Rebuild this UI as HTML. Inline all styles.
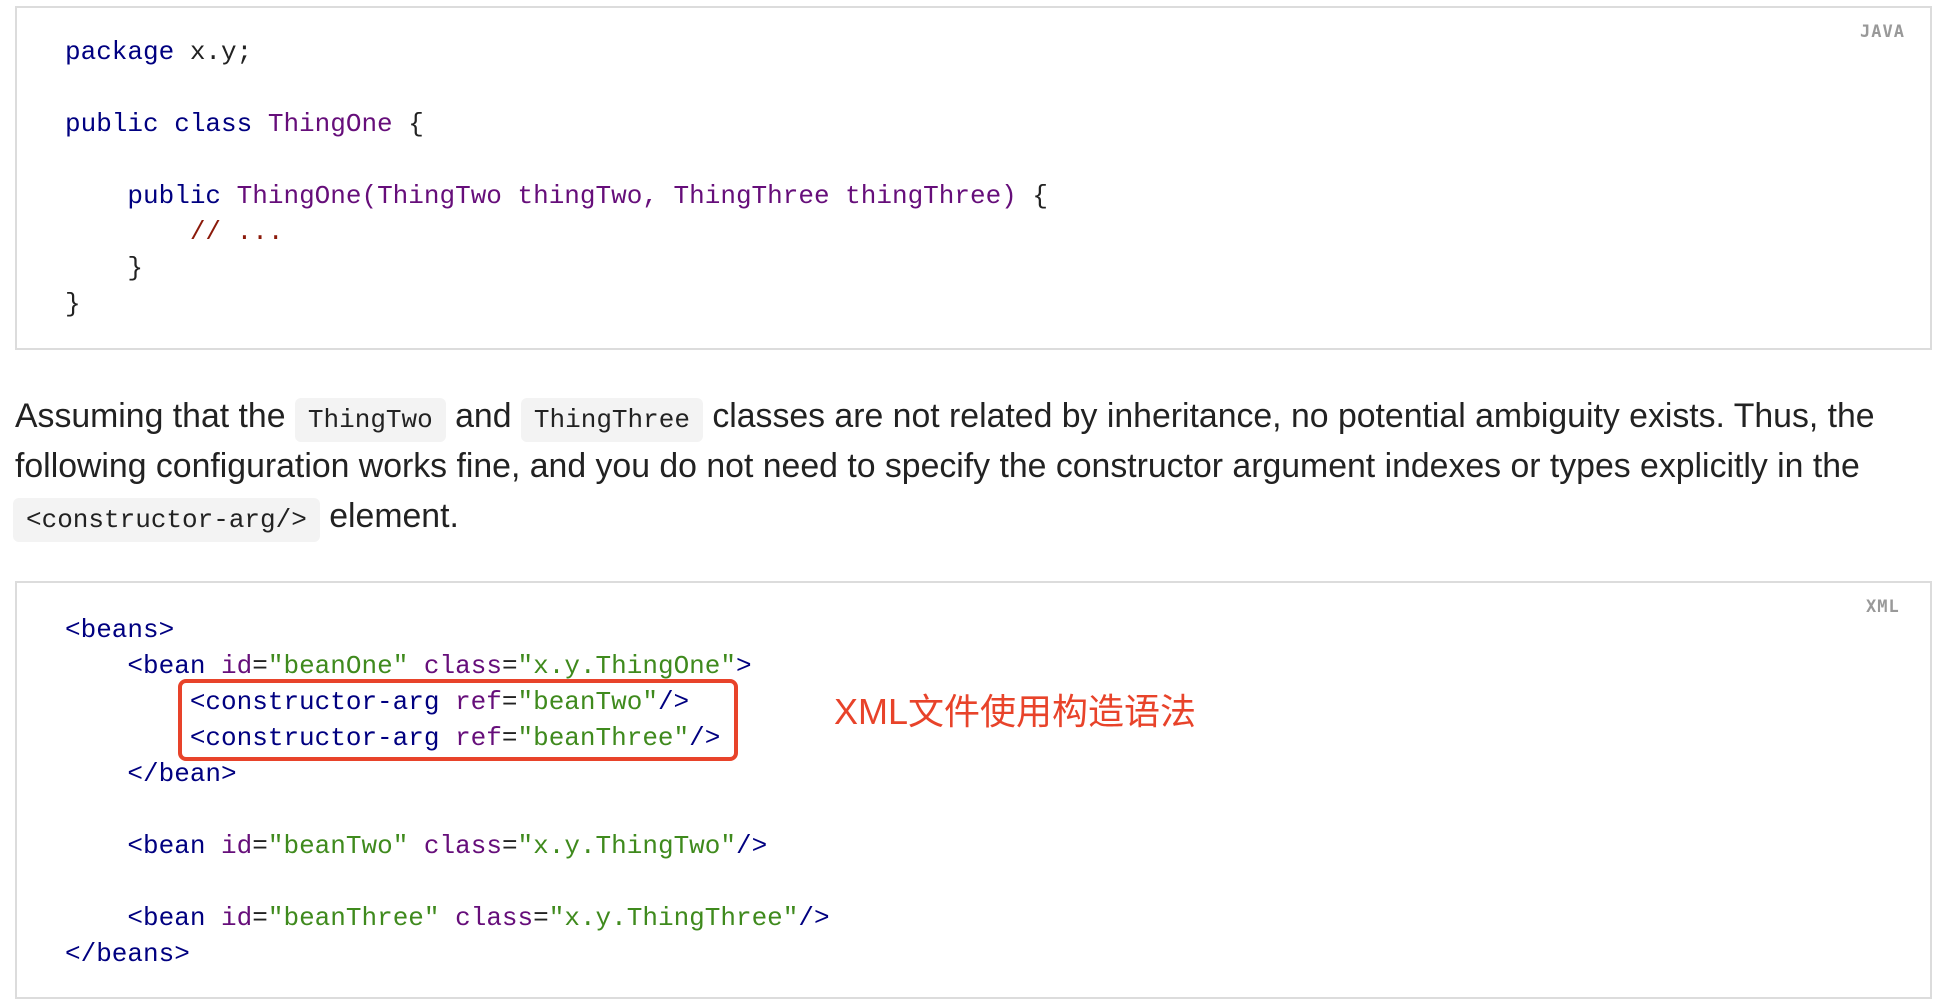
<!DOCTYPE html>
<html><head><meta charset="utf-8"><style>
html,body{margin:0;padding:0;background:#fff;width:1942px;height:1006px;overflow:hidden;position:relative}
.box{position:absolute;left:15px;width:1913px;border:2px solid #dcdcdc;background:#fff}
pre{position:absolute;margin:0;font-family:"Liberation Mono",monospace;font-size:26px;line-height:36px;color:#222}
.k{color:#000080}.t{color:#660e7a}.c{color:#8b1a0a}.s{color:#3f8a1d}.a{color:#660e7a}
.lab{position:absolute;font-family:"DejaVu Sans Mono",monospace;font-weight:bold;font-size:17px;color:#999;letter-spacing:1px}
.p{position:absolute;left:15px;font-family:"Liberation Sans",sans-serif;font-size:33.8px;color:#222;white-space:nowrap;line-height:50px}
code{font-family:"Liberation Mono",monospace;font-size:26px;background:#f3f3f3;border-radius:6px;padding:7px 13px}
</style></head><body>
<div class="box" style="top:6px;height:340px">
<div class="lab" style="left:1843px;top:14px">JAVA</div>
<pre style="left:48px;top:26px"><span class="k">package</span> x.y;

<span class="k">public class</span> <span class="t">ThingOne</span> {

    <span class="k">public</span> <span class="t">ThingOne(ThingTwo thingTwo, ThingThree thingThree)</span> {
        <span class="c">// ...</span>
    }
}</pre>
</div>
<div class="p" style="top:391px">Assuming that the <code>ThingTwo</code> and <code>ThingThree</code> classes are not related by inheritance, no potential ambiguity exists. Thus, the</div>
<div class="p" style="top:441px">following configuration works fine, and you do not need to specify the constructor argument indexes or types explicitly in the</div>
<div class="p" style="top:491px"><code style="margin-left:-2px">&lt;constructor-arg/&gt;</code> element.</div>
<div class="box" style="top:581px;height:414px">
<div class="lab" style="left:1849px;top:14px">XML</div>
<pre style="left:48px;top:29px"><span class="k">&lt;beans&gt;</span>
    <span class="k">&lt;bean</span> <span class="a">id</span>=<span class="s">"beanOne"</span> <span class="a">class</span>=<span class="s">"x.y.ThingOne"</span><span class="k">&gt;</span>
        <span class="k">&lt;constructor-arg</span> <span class="a">ref</span>=<span class="s">"beanTwo"</span><span class="k">/&gt;</span>
        <span class="k">&lt;constructor-arg</span> <span class="a">ref</span>=<span class="s">"beanThree"</span><span class="k">/&gt;</span>
    <span class="k">&lt;/bean&gt;</span>

    <span class="k">&lt;bean</span> <span class="a">id</span>=<span class="s">"beanTwo"</span> <span class="a">class</span>=<span class="s">"x.y.ThingTwo"</span><span class="k">/&gt;</span>

    <span class="k">&lt;bean</span> <span class="a">id</span>=<span class="s">"beanThree"</span> <span class="a">class</span>=<span class="s">"x.y.ThingThree"</span><span class="k">/&gt;</span>
<span class="k">&lt;/beans&gt;</span></pre>
</div>
<div style="position:absolute;left:178px;top:679px;width:552px;height:74px;border:4px solid #e8432a;border-radius:8px"></div>
<div style="position:absolute;left:834px;top:683px;font-family:'Liberation Sans','Noto Sans CJK SC',sans-serif;font-size:36px;color:#e8432a;white-space:nowrap">XML文件使用构造语法</div>
</body></html>
